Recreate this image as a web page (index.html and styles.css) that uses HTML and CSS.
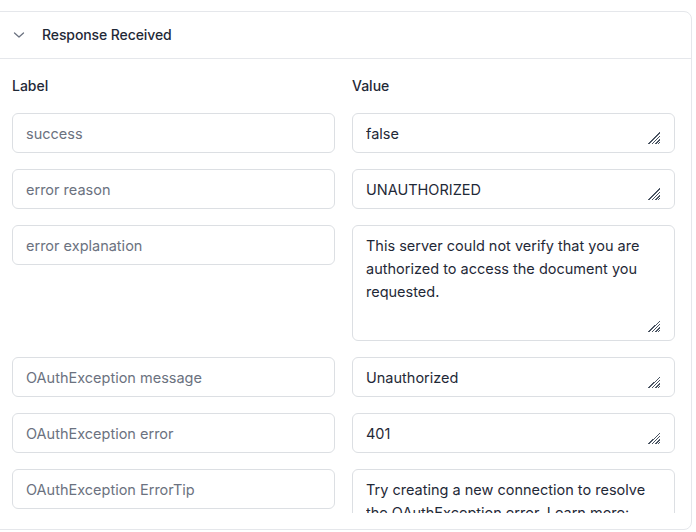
FILE: index.html
```html
<!DOCTYPE html>
<html lang="en">
<head>
<meta charset="utf-8">
<title>Response Received</title>
<link rel="stylesheet" href="styles.css">
</head>
<body>
<div class="page">
  <section class="card">
    <header class="card-header">
      <svg class="chevron" width="12" height="12" viewBox="0 0 12 12" aria-hidden="true">
        <path d="M1.5 4 L6 8 L10.5 4" fill="none" stroke="#6b7280" stroke-width="1.3" stroke-linecap="round" stroke-linejoin="round"/>
      </svg>
      <span class="title">Response Received</span>
    </header>
    <div class="card-body">
      <div class="grid">
        <div class="col-head">Label</div>
        <div class="col-head">Value</div>

        <input class="field" type="text" placeholder="success">
        <div class="value-box"><textarea class="value">false</textarea></div>

        <input class="field" type="text" placeholder="error reason">
        <div class="value-box"><textarea class="value">UNAUTHORIZED</textarea></div>

        <input class="field" type="text" placeholder="error explanation">
        <div class="value-box"><textarea class="value tall">This server could not verify that you are authorized to access the document you requested.</textarea></div>

        <input class="field" type="text" placeholder="OAuthException message">
        <div class="value-box"><textarea class="value">Unauthorized</textarea></div>

        <input class="field" type="text" placeholder="OAuthException error">
        <div class="value-box"><textarea class="value">401</textarea></div>

        <input class="field" type="text" placeholder="OAuthException ErrorTip">
        <div class="value-box"><textarea class="value tall">Try creating a new connection to resolve the OAuthException error. Learn more: https://docs.example.com/connections</textarea></div>
      </div>
    </div>
  </section>
</div>
</body>
</html>
```
FILE: styles.css
```css
* { box-sizing: border-box; }
html, body { margin: 0; padding: 0; background: #ffffff; }
body {
  font-family: "Inter", "Noto Sans", "Liberation Sans", sans-serif;
  color: #1f2937;
  height: 532px;
  overflow: hidden;
}
.page {
  height: 532px;
  padding: 11px 5px 2px 0;
  display: flex;
}
.card {
  flex: 1;
  margin-left: -9px;
  border: 1px solid #e5e7eb;
  border-radius: 8px;
  display: flex;
  flex-direction: column;
  min-height: 0;
  background: #fff;
}
.card-header {
  height: 47px;
  display: flex;
  align-items: center;
  gap: 17px;
  padding-left: 21px;
  padding-bottom: 1px;
  border-bottom: 1px solid #e5e7eb;
}
.chevron { flex: none; margin-top: 1px; }
.title {
  font-size: 14px;
  font-weight: 500;
  color: #1f2937;
  letter-spacing: -0.1px;
}
.card-body {
  flex: 1;
  min-height: 0;
  overflow: hidden;
  margin: 0 16px 16px 20px;
  padding-top: 17px;
}
.grid {
  display: grid;
  grid-template-columns: 323px 323px;
  column-gap: 17px;
  row-gap: 16px;
}
.col-head {
  font-size: 14px;
  line-height: 20px;
  font-weight: 500;
  color: #1f2937;
  margin-bottom: 1px;
}
.field,
.value-box {
  display: block;
  width: 100%;
  height: 40px;
  margin: 0;
  border: 1px solid #dcdfe3;
  border-radius: 6px;
  background: #fff;
}
.field {
  padding: 8px 13px;
  font-family: inherit;
  font-size: 14.5px;
  line-height: 23px;
  color: #1f2937;
  outline: none;
}
.field::placeholder { color: #6b7280; }
.value-box {
  height: auto;
  padding: 8px 14px 8px 13px;
}
.value {
  display: block;
  width: 100%;
  height: 22px;
  margin: 0;
  padding: 0;
  border: none;
  outline: none;
  resize: vertical;
  overflow: hidden;
  font-family: inherit;
  font-size: 14.5px;
  line-height: 23px;
  color: #1f2937;
  background: transparent;
}
.value::-webkit-resizer {
  background: linear-gradient(135deg,
    transparent 0 60%, #4b5563 60% 65%,
    transparent 65% 71%, #4b5563 71% 76%,
    transparent 76% 82%, #4b5563 82% 87%,
    transparent 87% 92%, #4b5563 92% 96%,
    transparent 96%);
}
.value.tall { height: 98px; }
```
